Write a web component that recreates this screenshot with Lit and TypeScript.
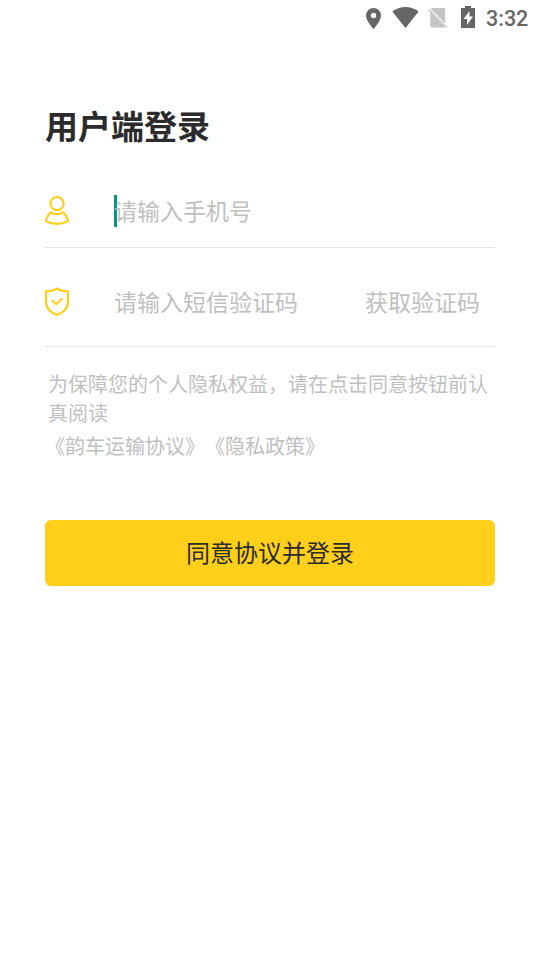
import { LitElement, html, css } from "lit";
import { customElement } from "lit/decorators.js";

@customElement("app-root")
export class AppRoot extends LitElement {
  static styles = css`
    :host { display: block; width: 540px; height: 960px; background: #fff; overflow: hidden; font-family: Roboto, "Noto Sans CJK SC", sans-serif; color: #2b2b2b; }
    * { box-sizing: border-box; }
    .status { height: 36px; display: flex; justify-content: flex-end; align-items: center; padding-right: 12px; color: #666; }
    .icons { display: block; width: 114px; height: 36px; margin-right: 8px; }
    .time { font-size: 21.5px; font-weight: 500; line-height: 36px; width: 42px; padding-top: 1px; white-space: nowrap; }
    main { padding: 67px 45px 0; }
    h1 { margin: 0; font-size: 33px; line-height: 50px; font-weight: 700; }
    .row { display: flex; align-items: center; border-bottom: 1px solid #e4e4e4; white-space: nowrap; font-size: 23px; color: #bfbfbf; }
    .phone { height: 72px; margin-top: 23px; padding-bottom: 2px; }
    .code { height: 99px; padding-top: 9px; }
    .row svg { width: 24px; height: 30px; flex: none; margin: -1px 45px 0 0; }
    .caret { width: 3px; height: 32px; background: #009688; margin-right: -3px; }
    .label { margin-top: -1px; }
    .send { margin-left: auto; padding-right: 15px; }
    .note { margin: 24px 0 0 3px; font-size: 20px; line-height: 29px; color: #bfbfbf; }
    .links { margin: 4px 0 0; font-size: 20px; line-height: 29px; color: #bfbfbf; white-space: nowrap; text-spacing-trim: space-all; }
    button { display: block; width: 450px; height: 66px; margin-top: 58px; padding: 3px 0 0; border: 0; border-radius: 6px; background: #ffcf1a; color: #2b2b2b; font: 24px/63px Roboto, "Noto Sans CJK SC", sans-serif; }
  `;
  render() {
    return html`
      <div class="status">
        <svg class="icons" viewBox="364 0 114 36" fill="#666">
          <path fill-rule="evenodd" d="M373.500 8a7.500 7.500 0 0 0-7.500 7.500C366 21 373.500 29 373.500 29S381 21 381 15.500A7.500 7.500 0 0 0 373.500 8Zm0 4.800a2.700 2.700 0 1 1 0 5.400 2.700 2.700 0 0 1 0-5.400Z"/>
          <path d="M405.500 28 392.300 11.600C400 5.500 411 5.500 418.700 11.600Z"/>
          <path fill="#c4c4c4" d="M431 9.200a1.700 1.700 0 0 1 1.500-1.200H443.500a1.700 1.700 0 0 1 1.700 1.700V23.400ZM430.300 12.300 445 27.500H432a1.700 1.700 0 0 1-1.700-1.700Z"/>
          <path d="m428.500 9.500 18 18" stroke="#c4c4c4" stroke-width="1.600"/>
          <path fill-rule="evenodd" d="M465 6h6v2h4v20h-14V8h4ZM469.500 11 463.500 19h3.500v6l6-8.500h-3.500Z"/>
        </svg>
        <div class="time">3:32</div>
      </div>
      <main>
        <h1>用户端登录</h1>
        <div class="row phone">
          <svg viewBox="0 0 24 30" fill="none" stroke="#ffcf1a" stroke-width="2.200" stroke-linejoin="round"><circle cx="12" cy="8.600" r="6.600"/><path d="M5.800 17.200C3.500 19.300 1.700 22 1.100 24.800c-.2 1 .3 1.600 1.200 2 5.500 2.700 13.900 2.700 19.400 0 .9-.4 1.400-1 1.200-2-.6-2.800-2.400-5.500-4.700-7.600-3.800 2.500-8.600 2.500-12.400 0Z"/></svg>
          <span class="caret"></span><span class="label">请输入手机号</span>
        </div>
        <div class="row code">
          <svg viewBox="0 0 24 30" fill="none" stroke="#ffcf1a" stroke-width="2.200" stroke-linejoin="round"><path d="M12 2.500C9 4.500 5 5.300 1.100 5.300v12c0 5 5 9.500 10.900 11.500 5.900-2 10.900-6.500 10.900-11.500v-12C19 5.300 15 4.500 12 2.500Z"/><path d="m7.500 14.800 3.700 3.500 5.900-5.600" stroke-linecap="round"/></svg>
          <span class="label">请输入短信验证码</span><span class="label send">获取验证码</span>
        </div>
        <p class="note">为保障您的个人隐私权益，请在点击同意按钮前认真阅读</p>
        <p class="links">《韵车运输协议》《隐私政策》</p>
        <button>同意协议并登录</button>
      </main>`;
  }
}
